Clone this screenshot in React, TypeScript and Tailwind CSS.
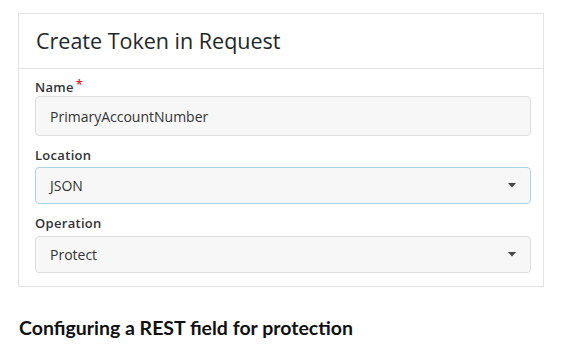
const Caret = () => (
  <svg width="8" height="5" viewBox="0 0 8 5" className="shrink-0">
    <path d="M0 0h8L4 4.5z" fill="#444" />
  </svg>
)

const labelCls = 'block text-[13px] font-semibold text-[#333] leading-[18px] tracking-[0.3px]'
const fieldCls = 'rounded-[4px] bg-[#f7f7f7] flex items-center justify-between px-[14px] text-[14px] text-[#333]'

export default function App() {
  return (
    <div className="w-[564px] h-[363px] bg-white pt-[13px] pl-[18px]" style={{ fontFamily: '"Open Sans", sans-serif' }}>
      <div className="w-[526px] border border-[#e3e3e3]">
        <div className="h-[55px] flex items-center px-[17px] border-b border-[#e3e3e3]">
          <h1 className="text-[21.5px] font-medium text-[#23272b]">Create Token in Request</h1>
        </div>
        <div className="pl-[16px] pr-[12px] pt-[9px] pb-[13px]">
          <label className={labelCls}>
            Name<span className="text-[#e0262b] ml-[2px] relative -top-[3px]">*</span>
          </label>
          <div className={`${fieldCls} h-[40px] border border-[#dedede]`}>
            PrimaryAccountNumber
          </div>

          <label className={`${labelCls} mt-[10px]`}>Location</label>
          <div className={`${fieldCls} mt-[3px] h-[37px] border border-[#a9d3e3]`}>
            <span>JSON</span>
            <Caret />
          </div>

          <label className={`${labelCls} mt-[10px]`}>Operation</label>
          <div className={`${fieldCls} mt-[4px] h-[37px] border border-[#dedede]`}>
            <span>Protect</span>
            <Caret />
          </div>
        </div>
      </div>
      <p className="mt-[28px] ml-[1px] text-[19.5px] leading-[26px] font-bold text-[#111]" style={{ fontFamily: 'Lato, sans-serif' }}>
        Configuring a REST field for protection
      </p>
    </div>
  )
}
